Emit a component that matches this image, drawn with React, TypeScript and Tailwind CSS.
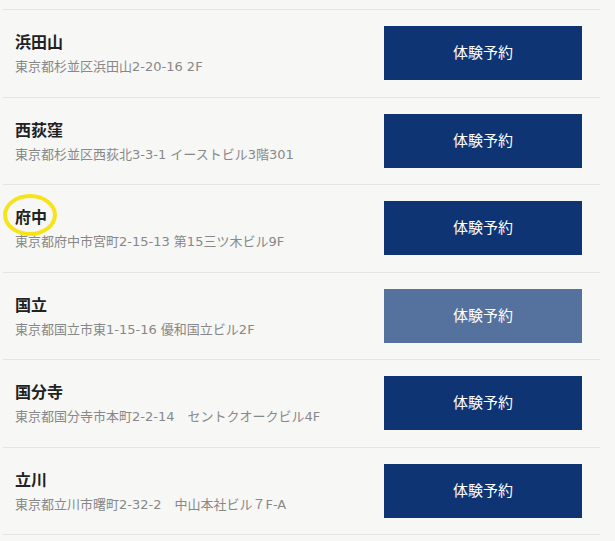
const shops = [
    { name: "浜田山", address: "東京都杉並区浜田山2-20-16 2F" },
    { name: "西荻窪", address: "東京都杉並区西荻北3-3-1 イーストビル3階301" },
    { name: "府中", address: "東京都府中市宮町2-15-13 第15三ツ木ビル9F", marked: true },
    { name: "国立", address: "東京都国立市東1-15-16 優和国立ビル2F", faded: true },
    { name: "国分寺", address: "東京都国分寺市本町2-2-14\u3000セントクオークビル4F" },
    { name: "立川", address: "東京都立川市曙町2-32-2\u3000中山本社ビル７F-A" },
];

const App = () => {
    return (
        <div
            className="min-h-[541px] w-full bg-[#f7f7f6] pt-[9px] pl-[3px]"
            style={{ fontFamily: '"DejaVu Sans", "Noto Sans CJK JP", sans-serif' }}
        >
            <div className="w-[597px] border-t border-[#e4e4e2]">
                {shops.map((s) => (
                    <div
                        key={s.name}
                        className="flex h-[87.5px] items-center justify-between border-b border-[#e4e4e2] pr-[18px] pl-[12px]"
                    >
                        <div className="flex flex-col pt-[2px]">
                            <div className="relative w-fit">
                                {s.marked && (
                                    <span className="absolute -top-[12px] -left-[12px] h-[42px] w-[54px] rounded-[50%] border-[4px] border-[#f7e31a]" />
                                )}
                                <span className="relative text-[16px] leading-[22px] font-bold text-[#222]">
                                    {s.name}
                                </span>
                            </div>
                            <span className="mt-[2px] text-[13px] leading-[20px] text-[#888]">
                                {s.address}
                            </span>
                        </div>
                        <button
                            className={`flex h-[54px] w-[198px] items-center justify-center text-[15px] text-white ${
                                s.faded ? "bg-[#55719e]" : "bg-[#0e3473]"
                            }`}
                        >
                            体験予約
                        </button>
                    </div>
                ))}
            </div>
        </div>
    );
};

export default App;
